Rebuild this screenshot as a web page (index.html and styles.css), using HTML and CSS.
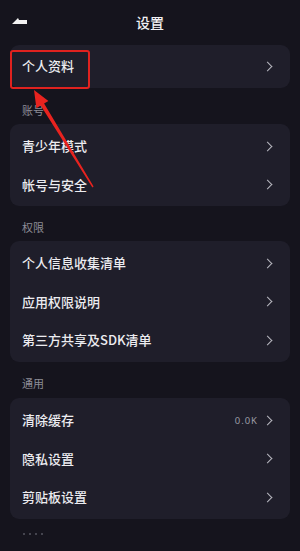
FILE: index.html
```html
<!DOCTYPE html>
<html lang="zh">
<head>
<meta charset="utf-8">
<link rel="stylesheet" href="styles.css">
</head>
<body>
<div class="screen">
  <header class="topbar">
    <svg class="back" width="16" height="10" viewBox="0 0 16 10"><polygon points="0,7 6,1 7,3 15,3 15,7" fill="#f2f2f2"/></svg>
    <div class="title">设置</div>
  </header>

  <div class="card card-single">
    <div class="row"><span class="txt">个人资料</span><span class="chev"></span></div>
  </div>

  <div class="label label-a">账号</div>
  <div class="card">
    <div class="row"><span class="txt">青少年模式</span><span class="chev"></span></div>
    <div class="row"><span class="txt">帐号与安全</span><span class="chev"></span></div>
  </div>

  <div class="label label-b">权限</div>
  <div class="card">
    <div class="row"><span class="txt">个人信息收集清单</span><span class="chev"></span></div>
    <div class="row"><span class="txt">应用权限说明</span><span class="chev"></span></div>
    <div class="row"><span class="txt">第三方共享及SDK清单</span><span class="chev"></span></div>
  </div>

  <div class="label label-c">通用</div>
  <div class="card">
    <div class="row"><span class="txt">清除缓存</span><span class="val">0.0K</span><span class="chev"></span></div>
    <div class="row"><span class="txt">隐私设置</span><span class="chev"></span></div>
    <div class="row"><span class="txt">剪贴板设置</span><span class="chev"></span></div>
  </div>

  <div class="dots"><i></i><i></i><i></i><i></i></div>

  <div class="redbox"></div>
  <svg class="redarrow" width="300" height="200" viewBox="0 0 300 200">
    <polygon points="34,90 48.4,100.9 44.1,103.6 93.6,186.6 92.4,187.4 40.7,105.6 36.4,108.3" fill="#e8231f"/>
  </svg>
</div>
</body>
</html>
```
FILE: styles.css
```css
html, body {
  margin: 0;
  padding: 0;
  background: #15141d;
}
.screen {
  position: relative;
  width: 300px;
  height: 551px;
  overflow: hidden;
  background: #15141d;
  font-family: "Noto Sans CJK SC", "Noto Sans", sans-serif;
  color: #ececf0;
}
.topbar {
  position: relative;
  height: 45px;
  display: flex;
  align-items: center;
  justify-content: center;
}
.back {
  position: absolute;
  left: 12px;
  top: 17px;
}
.title {
  font-size: 14px;
  line-height: 16px;
  margin-top: -1px;
  font-weight: 500;
  color: #f0f0f3;
}
.card {
  margin: 0 10px;
  background: #1f1e2a;
  border-radius: 9px;
  padding: 3px 0 2px;
}
.card-single {
  padding: 2px 0 2.5px;
}
.row {
  height: 38.5px;
  display: flex;
  align-items: center;
  padding: 0 17px 0 12px;
}
.txt {
  flex: 1;
  font-size: 13px;
  line-height: 16px;
  font-weight: 500;
  color: #ececf0;
}
.val {
  font-size: 9.5px;
  letter-spacing: 1px;
  color: #9a9aa4;
  margin-right: 6px;
  font-family: "Noto Sans", sans-serif;
}
.chev {
  width: 6px;
  height: 6px;
  border-top: 1.6px solid #b8b8c0;
  border-right: 1.6px solid #b8b8c0;
  transform: rotate(45deg);
  margin-right: 2px;
}
.label {
  box-sizing: border-box;
  padding-left: 22px;
  font-size: 11px;
  line-height: 14px;
  color: #8c8c96;
}
.label-a {
  height: 36px;
  padding-top: 15px;
}
.label-b {
  height: 35px;
  padding-top: 14px;
}
.label-c {
  height: 36.5px;
  padding-top: 14.5px;
}
.dots {
  display: flex;
  gap: 4px;
  padding: 14px 0 0 23px;
}
.dots i {
  width: 2px;
  height: 2px;
  border-radius: 1px;
  background: #55555f;
}
.redbox {
  position: absolute;
  left: 10px;
  top: 50px;
  width: 76px;
  height: 35px;
  border: 2px solid #e0221f;
  border-radius: 3px;
}
.redarrow {
  position: absolute;
  left: 0;
  top: 0;
}
```
